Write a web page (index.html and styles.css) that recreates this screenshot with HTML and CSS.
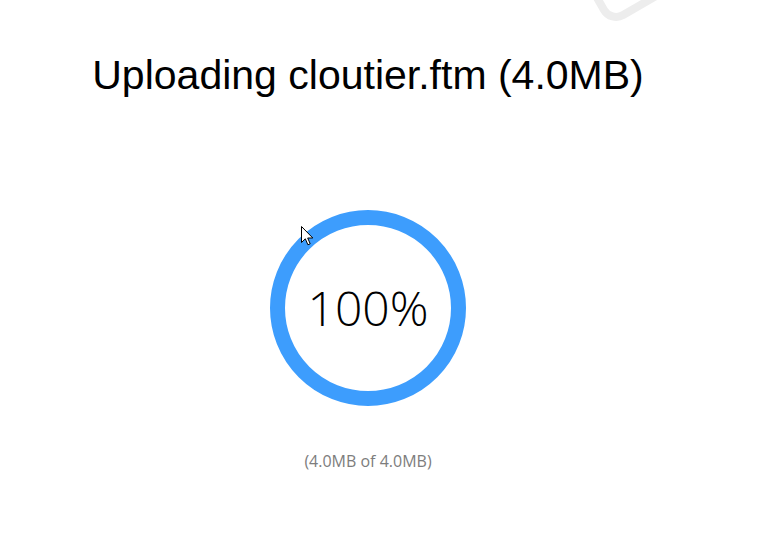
FILE: index.html
```html
<!DOCTYPE html>
<html lang="en">
<head>
  <meta charset="UTF-8" />
  <title>Uploading</title>
  <link rel="stylesheet" href="styles.css">
</head>
<body>
  <svg class="watermark" width="206" height="60" viewBox="560 0 206 60">
    <g transform="translate(611 22) rotate(-30)">
      <rect x="0" y="-110" width="110" height="110" rx="14" fill="none" stroke="#ededed" stroke-width="8"/>
    </g>
  </svg>

  <main class="upload">
    <h1 class="upload-title">Uploading cloutier.ftm (4.0MB)</h1>

    <div class="ring">
      <span class="ring-value">100%</span>
    </div>

    <p class="upload-size">(4.0MB of 4.0MB)</p>
  </main>

  <svg class="cursor" width="14" height="22" viewBox="0 0 14 22">
    <path d="M0.5 0.5 L0.5 16.5 L4.3 12.8 L6.9 18.8 L9.2 17.8 L6.7 12 L11.8 12 Z" fill="#fff" stroke="#000" stroke-width="1" stroke-linejoin="miter"/>
  </svg>
</body>
</html>
```

FILE: styles.css
```css
* {
  box-sizing: border-box;
  margin: 0;
  padding: 0;
}

body {
  background-color: white;
  font-family: 'Open Sans', 'Noto Sans', sans-serif;
  overflow: hidden;
}

.upload {
  width: 736px;
  padding-top: 52px;
  text-align: center;
}

.upload-title {
  font-family: 'Liberation Sans', Arial, sans-serif;
  font-size: 41px;
  font-weight: 400;
  line-height: 46px;
  color: black;
}

.ring {
  width: 196px;
  height: 196px;
  margin: 112px auto 0;
  border: 15px solid #3d9dfd;
  border-radius: 50%;
  display: flex;
  align-items: center;
  justify-content: center;
}

.ring-value {
  font-size: 48px;
  font-weight: 300;
  line-height: 1;
  color: black;
}

.upload-size {
  margin-top: 44px;
  font-size: 16px;
  line-height: 22px;
  color: #7d7d7d;
}

.watermark {
  position: absolute;
  top: 0;
  left: 560px;
}

.cursor {
  position: absolute;
  top: 226px;
  left: 301px;
}
```
